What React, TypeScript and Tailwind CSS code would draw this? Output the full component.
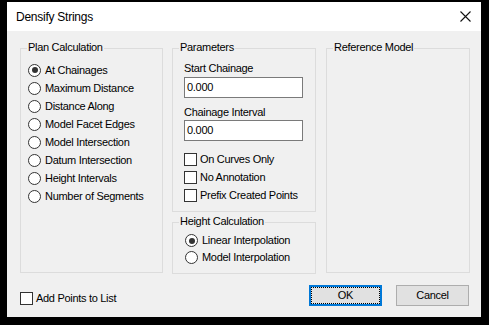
import React from "react";

const font = { fontFamily: '"Liberation Sans", Arial, sans-serif' };

function Radio({ checked, label }: { checked?: boolean; label: string }) {
  return (
    <div className="flex h-[18px] items-center">
      <span className="flex h-[13px] w-[13px] shrink-0 items-center justify-center rounded-full border border-[#333333] bg-white">
        {checked && <span className="h-[6px] w-[6px] rounded-full bg-[#333333]" />}
      </span>
      <span className="ml-[4px] whitespace-nowrap">{label}</span>
    </div>
  );
}

function Check({ label }: { label: string }) {
  return (
    <div className="flex h-[13px] items-center">
      <span className="h-[13px] w-[13px] shrink-0 border border-[#333333] bg-white" />
      <span className="ml-[3px] whitespace-nowrap">{label}</span>
    </div>
  );
}

function Group({
  label,
  className,
  children,
}: {
  label: string;
  className: string;
  children?: React.ReactNode;
}) {
  return (
    <div className={"relative border border-[#dcdcdc] " + className}>
      <span className="absolute left-[6px] top-[-8px] bg-[#f0f0f0] px-[1px] leading-[13px] whitespace-nowrap">
        {label}
      </span>
      {children}
    </div>
  );
}

export default function App() {
  return (
    <div className="h-[325px] w-[489px] bg-black pl-[7px] pt-[2px]" style={font}>
      <div className="flex h-[315px] w-[474px] flex-col bg-[#f0f0f0] text-[11px] tracking-[-0.3px] text-black">
        {/* Title bar */}
        <div className="flex h-[29px] items-center bg-white pl-[9px] pr-[10px]">
          <span className="text-[12px] tracking-[-0.25px]">Densify Strings</span>
          <svg className="ml-auto" width="11" height="11" viewBox="0 0 11 11">
            <path d="M0.5 0.5 L10.5 10.5 M10.5 0.5 L0.5 10.5" stroke="#111" strokeWidth="1.1" />
          </svg>
        </div>

        {/* Body */}
        <div className="flex flex-1 flex-col pl-[13px] pt-[17px]">
          <div className="flex">
            <Group label="Plan Calculation" className="h-[225px] w-[143px] pl-[7px] pt-[12px]">
              <Radio checked label="At Chainages" />
              <Radio label="Maximum Distance" />
              <Radio label="Distance Along" />
              <Radio label="Model Facet Edges" />
              <Radio label="Model Intersection" />
              <Radio label="Datum Intersection" />
              <Radio label="Height Intervals" />
              <Radio label="Number of Segments" />
            </Group>

            <div className="ml-[9px] flex w-[144px] flex-col">
              <Group label="Parameters" className="h-[164px] w-[144px] pl-[11px] pt-[13px]">
                <div className="leading-[13px]">Start Chainage</div>
                <div className="mt-[2px] flex h-[21px] w-[119px] items-center border border-[#7a7a7a] bg-white pl-[2px]">
                  0.000
                </div>
                <div className="mt-[8px] leading-[13px]">Chainage Interval</div>
                <div className="mt-[1px] flex h-[21px] w-[119px] items-center border border-[#7a7a7a] bg-white pl-[2px]">
                  0.000
                </div>
                <div className="mt-[12px] flex flex-col gap-[5px]">
                  <Check label="On Curves Only" />
                  <Check label="No Annotation" />
                  <Check label="Prefix Created Points" />
                </div>
              </Group>
              <Group label="Height Calculation" className="mt-[10px] h-[52px] w-[144px] pl-[12px] pt-[9px]">
                <div className="[&>div]:h-[17px]">
                  <Radio checked label="Linear Interpolation" />
                  <Radio label="Model Interpolation" />
                </div>
              </Group>
            </div>

            <Group label="Reference Model" className="ml-[10px] h-[225px] w-[144px]" />
          </div>

          <div className="mt-[11px] flex items-start pr-[12px]">
            <div className="ml-[0px] mt-[7px]">
              <Check label="Add Points to List" />
            </div>
            <div className="ml-auto flex gap-[14px]">
              <div className="relative flex h-[21px] w-[73px] items-center justify-center border-2 border-[#0078d7] bg-[#e1e1e1]">
                <span className="absolute inset-0 border border-dotted border-black" />
                <span>OK</span>
              </div>
              <div className="flex h-[21px] w-[73px] items-center justify-center border border-[#adadad] bg-[#e1e1e1]">
                Cancel
              </div>
            </div>
          </div>
        </div>
      </div>
    </div>
  );
}
